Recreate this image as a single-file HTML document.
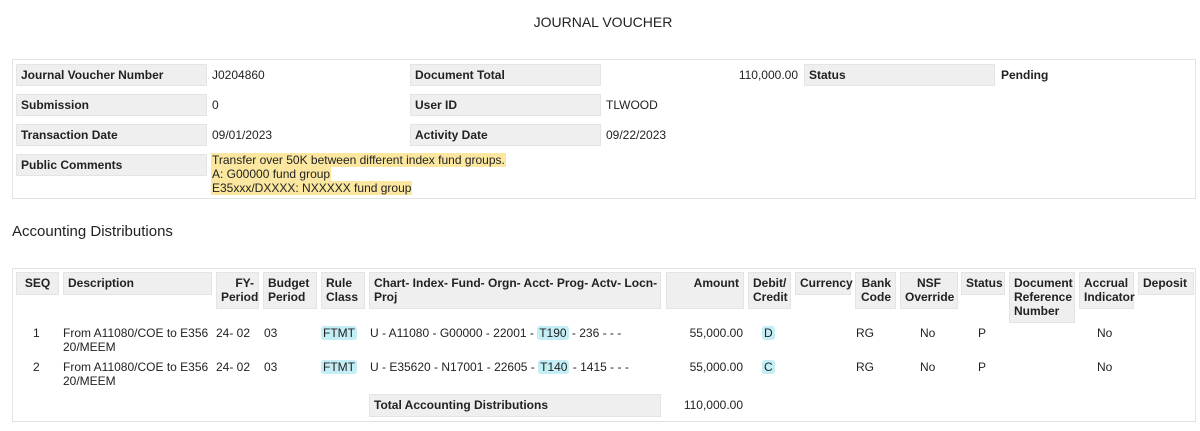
<!DOCTYPE html>
<html><head><meta charset="utf-8"><style>
*{margin:0;padding:0;box-sizing:border-box}
body{width:1200px;height:431px;background:#fff;font-family:"Liberation Sans",sans-serif;font-size:12px;color:#222;position:relative;overflow:hidden}
div{position:absolute}
.box{border:1px solid #e2e2e2;background:#fff}
.l{background:#efefef;border:1px solid #e4e4e4;font-weight:bold;padding:3px 4px;line-height:14px}
.t{line-height:14px;white-space:nowrap}
.h{background:#efefef;border:1px solid #e4e4e4;font-weight:bold;padding:3px 4px;line-height:14px;white-space:nowrap}
.c{text-align:center}.r{text-align:right}
.hl{background:#c4eef5;border-radius:3px;padding:0 2px}
.y{background:#fbe7a0;padding:0 1px}
</style></head><body>
<div class="t" style="left:0;width:1206px;top:15px;text-align:center;font-size:14px">JOURNAL VOUCHER</div>

<div class="box" style="left:12px;top:59px;width:1184px;height:140px"></div>
<div class="l" style="left:16px;top:64px;width:191px;height:22px">Journal Voucher Number</div>
<div class="t" style="left:212px;top:68px">J0204860</div>
<div class="l" style="left:410px;top:64px;width:191px;height:22px">Document Total</div>
<div class="t" style="left:690px;width:108px;top:68px;text-align:right">110,000.00</div>
<div class="l" style="left:804px;top:64px;width:191px;height:22px">Status</div>
<div class="t" style="left:1001px;top:68px;font-weight:bold">Pending</div>

<div class="l" style="left:16px;top:94px;width:191px;height:22px">Submission</div>
<div class="t" style="left:212px;top:98px">0</div>
<div class="l" style="left:410px;top:94px;width:191px;height:22px">User ID</div>
<div class="t" style="left:606px;top:98px">TLWOOD</div>

<div class="l" style="left:16px;top:124px;width:191px;height:22px">Transaction Date</div>
<div class="t" style="left:212px;top:128px">09/01/2023</div>
<div class="l" style="left:410px;top:124px;width:191px;height:22px">Activity Date</div>
<div class="t" style="left:606px;top:128px">09/22/2023</div>

<div class="l" style="left:16px;top:154px;width:191px;height:22px">Public Comments</div>
<div class="t" style="left:211px;top:153px;line-height:14px"><span class="y">Transfer over 50K between different index fund groups.</span><br><span class="y">A: G00000 fund group</span><br><span class="y">E35xxx/DXXXX: NXXXXX fund group</span></div>

<div class="t" style="left:12px;top:223px;font-size:15px;line-height:17px">Accounting Distributions</div>

<div class="box" style="left:12px;top:268px;width:1184px;height:154px"></div>
<div class="h c" style="left:16px;top:272px;width:43px;height:23px">SEQ</div>
<div class="h" style="left:63px;top:272px;width:149px;height:23px">Description</div>
<div class="h r" style="left:216px;top:272px;width:43px;height:37px">FY-<br>Period</div>
<div class="h" style="left:263px;top:272px;width:54px;height:37px">Budget<br>Period</div>
<div class="h" style="left:321px;top:272px;width:44px;height:37px">Rule<br>Class</div>
<div class="h" style="left:369px;top:272px;width:292px;height:37px">Chart- Index- Fund- Orgn- Acct- Prog- Actv- Locn-<br>Proj</div>
<div class="h r" style="left:666px;top:272px;width:78px;height:37px">Amount</div>
<div class="h r" style="left:748px;top:272px;width:43px;height:37px">Debit/<br>Credit</div>
<div class="h" style="left:795px;top:272px;width:56px;height:23px">Currency</div>
<div class="h r" style="left:855px;top:272px;width:41px;height:37px">Bank<br>Code</div>
<div class="h c" style="left:900px;top:272px;width:58px;height:37px">NSF<br>Override</div>
<div class="h" style="left:961px;top:272px;width:44px;height:23px">Status</div>
<div class="h" style="left:1009px;top:272px;width:66px;height:51px">Document<br>Reference<br>Number</div>
<div class="h" style="left:1079px;top:272px;width:55px;height:37px">Accrual<br>Indicator</div>
<div class="h" style="left:1138px;top:272px;width:56px;height:23px">Deposit</div>

<div class="t" style="left:33px;top:326px">1</div>
<div class="t" style="left:63px;top:326px">From A11080/COE to E356<br>20/MEEM</div>
<div class="t" style="left:216px;top:326px">24- 02</div>
<div class="t" style="left:264px;top:326px">03</div>
<div class="t" style="left:321px;top:326px"><span class="hl">FTMT</span></div>
<div class="t" style="left:370px;top:326px">U - A11080 - G00000 - 22001 - <span class="hl">T190</span> - 236 - - -</div>
<div class="t r" style="left:660px;width:83px;top:326px">55,000.00</div>
<div class="t" style="left:762px;top:326px"><span class="hl">D</span></div>
<div class="t" style="left:856px;top:326px">RG</div>
<div class="t" style="left:920px;top:326px">No</div>
<div class="t" style="left:978px;top:326px">P</div>
<div class="t" style="left:1097px;top:326px">No</div>

<div class="t" style="left:33px;top:360px">2</div>
<div class="t" style="left:63px;top:360px">From A11080/COE to E356<br>20/MEEM</div>
<div class="t" style="left:216px;top:360px">24- 02</div>
<div class="t" style="left:264px;top:360px">03</div>
<div class="t" style="left:321px;top:360px"><span class="hl">FTMT</span></div>
<div class="t" style="left:370px;top:360px">U - E35620 - N17001 - 22605 - <span class="hl">T140</span> - 1415 - - -</div>
<div class="t r" style="left:660px;width:83px;top:360px">55,000.00</div>
<div class="t" style="left:762px;top:360px"><span class="hl">C</span></div>
<div class="t" style="left:856px;top:360px">RG</div>
<div class="t" style="left:920px;top:360px">No</div>
<div class="t" style="left:978px;top:360px">P</div>
<div class="t" style="left:1097px;top:360px">No</div>

<div class="h" style="left:369px;top:394px;width:292px;height:23px">Total Accounting Distributions</div>
<div class="t r" style="left:660px;width:83px;top:398px">110,000.00</div>
</body></html>
